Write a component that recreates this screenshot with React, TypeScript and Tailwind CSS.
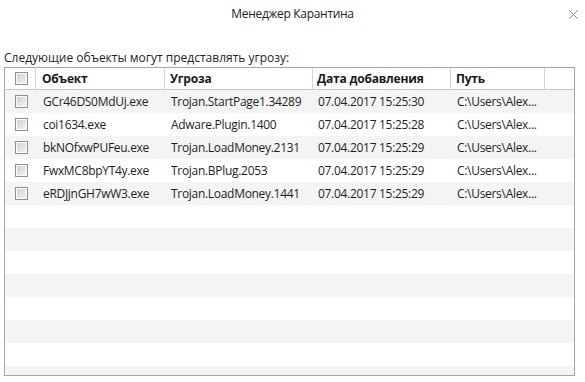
import React from 'react';

const rows = [
  { file: 'GCr46DS0MdUj.exe', threat: 'Trojan.StartPage1.34289', date: '07.04.2017 15:25:30' },
  { file: 'coi1634.exe', threat: 'Adware.Plugin.1400', date: '07.04.2017 15:25:28' },
  { file: 'bkNOfxwPUFeu.exe', threat: 'Trojan.LoadMoney.2131', date: '07.04.2017 15:25:29' },
  { file: 'FwxMC8bpYT4y.exe', threat: 'Trojan.BPlug.2053', date: '07.04.2017 15:25:29' },
  { file: 'eRDJjnGH7wW3.exe', threat: 'Trojan.LoadMoney.1441', date: '07.04.2017 15:25:29' },
];

const cols = 'grid grid-cols-[31px_129px_148px_138px_94px_1fr]';

function Check() {
  return (
    <div className="w-[13px] h-[13px] border border-[#8e8f8f] bg-white p-[1px]">
      <div className="w-full h-full bg-gradient-to-br from-[#d2d2d2] to-[#f2f2f2]" />
    </div>
  );
}

export default function App() {
  const empty = Array.from({ length: 8 });

  return (
    <div
      className="w-[585px] h-[382px] bg-white text-[12px] text-[#1e1e1e] overflow-hidden"
      style={{ fontFamily: '"Open Sans", "Noto Sans", sans-serif' }}
    >
      <div className="relative h-[28px] flex items-center justify-center text-[12px] tracking-[-0.3px] text-[#222]">
        Менеджер Карантина
        <svg className="absolute right-[6px] top-[9px]" width="11" height="11" viewBox="0 0 11 11">
          <path d="M1 1L10 10M10 1L1 10" stroke="#8a8a8a" strokeWidth="1" />
        </svg>
      </div>

      <div className="pl-[4px] pt-[22px] h-[39px] leading-[16px]">
        Следующие объекты могут представлять угрозу:
      </div>

      <div className="ml-[4px] w-[571px] h-[309px] border border-[#a5a5a5] overflow-hidden">
        <div className={`${cols} h-[22px] border-b border-[#c8c8c8] font-bold text-[#1a1a1a] tracking-[-0.2px]`}>
          <div className="flex items-center justify-center border-r border-[#d5d5d5] pl-[2px]">
            <Check />
          </div>
          <div className="flex items-center pl-[6px] border-r border-[#d5d5d5]">Объект</div>
          <div className="flex items-center pl-[5px] border-r border-[#d5d5d5]">Угроза</div>
          <div className="flex items-center pl-[4px] border-r border-[#d5d5d5]">Дата добавления</div>
          <div className="flex items-center pl-[5px] border-r border-[#d5d5d5]">Путь</div>
          <div />
        </div>

        {rows.map((r, i) => (
          <div
            key={r.file}
            className={`${cols} h-[23px] items-center tracking-[-0.3px] ${i % 2 === 0 ? 'bg-[#f4f4f4]' : 'bg-white'}`}
          >
            <div className="flex justify-center pl-[2px]">
              <Check />
            </div>
            <div className="pl-[7px] whitespace-nowrap">{r.file}</div>
            <div className="pl-[6px] whitespace-nowrap">{r.threat}</div>
            <div className="pl-[5px] whitespace-nowrap">{r.date}</div>
            <div className="pl-[6px] whitespace-nowrap">C:\Users\Alex...</div>
            <div />
          </div>
        ))}

        {empty.map((_, i) => (
          <div key={i} className={`h-[23px] ${i % 2 === 0 ? 'bg-white' : 'bg-[#f4f4f4]'}`} />
        ))}
      </div>
    </div>
  );
}
